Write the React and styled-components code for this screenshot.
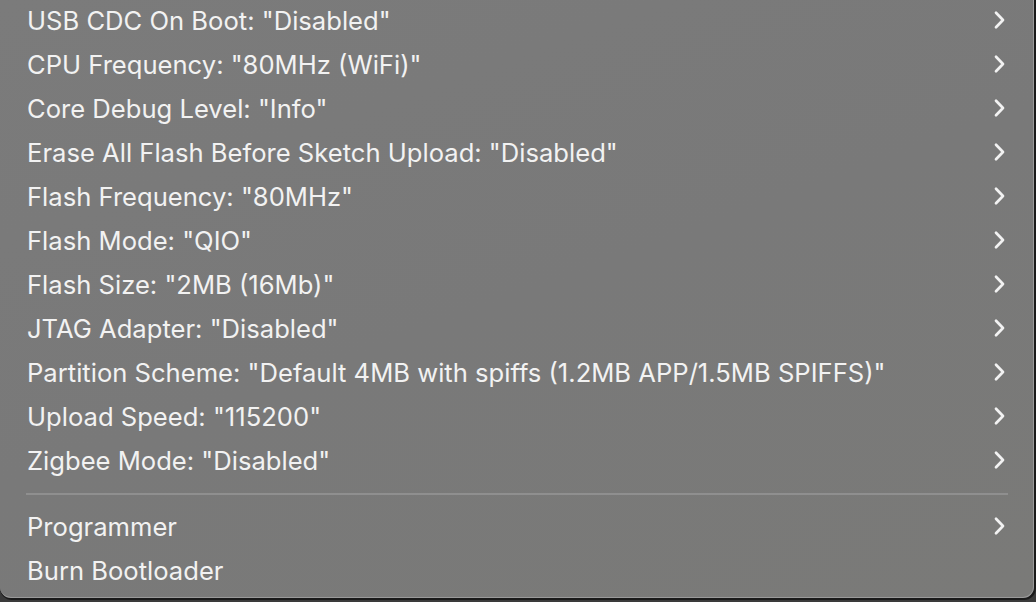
import React from "react";
import styled, { createGlobalStyle } from "styled-components";

const Global = createGlobalStyle`
  html, body { margin: 0; padding: 0; background: #3a3a3a; }
  body { width: 1036px; height: 602px; overflow: hidden; }
`;

const Panel = styled.div`
  width: 1034px;
  height: 598px;
  box-sizing: border-box;
  background: linear-gradient(160deg, #7b7b7b 0%, #797979 50%, #7a7a78 100%);
  border-right: 1px solid #9a9a9a;
  border-bottom: 1px solid #9a9a9a;
  border-radius: 0 0 11px 11px;
  box-shadow: 1px 1px 0 1px #1a1a1a;
  display: flex;
  flex-direction: column;
  font-family: Inter, "Open Sans", sans-serif;
  color: #f2f2f2;
`;

const Row = styled.div`
  height: 44px;
  box-sizing: border-box;
  display: flex;
  align-items: center;
  justify-content: space-between;
  padding: 0 27px 4px 27px;
  font-size: 25.6px;
  white-space: nowrap;
`;

const Separator = styled.div`
  height: 2px;
  margin: 9px 25px 11px 26px;
  background: #8f8f8f;
`;

const Chevron = () => (
  <svg width="14" height="20" viewBox="0 0 14 20" fill="none">
    <path d="M4 2.8 L11 10 L4 17.2" stroke="#f2f2f2" strokeWidth="2.7" strokeLinecap="round" strokeLinejoin="round" />
  </svg>
);

const items = [
  'USB CDC On Boot: "Disabled"',
  'CPU Frequency: "80MHz (WiFi)"',
  'Core Debug Level: "Info"',
  'Erase All Flash Before Sketch Upload: "Disabled"',
  'Flash Frequency: "80MHz"',
  'Flash Mode: "QIO"',
  'Flash Size: "2MB (16Mb)"',
  'JTAG Adapter: "Disabled"',
  'Partition Scheme: "Default 4MB with spiffs (1.2MB APP/1.5MB SPIFFS)"',
  'Upload Speed: "115200"',
  'Zigbee Mode: "Disabled"',
];

export default function App() {
  return (
    <>
      <Global />
      <Panel>
        {items.map((t) => (
          <Row key={t}>
            <span>{t}</span>
            <Chevron />
          </Row>
        ))}
        <Separator />
        <Row>
          <span>Programmer</span>
          <Chevron />
        </Row>
        <Row>
          <span>Burn Bootloader</span>
        </Row>
      </Panel>
    </>
  );
}
